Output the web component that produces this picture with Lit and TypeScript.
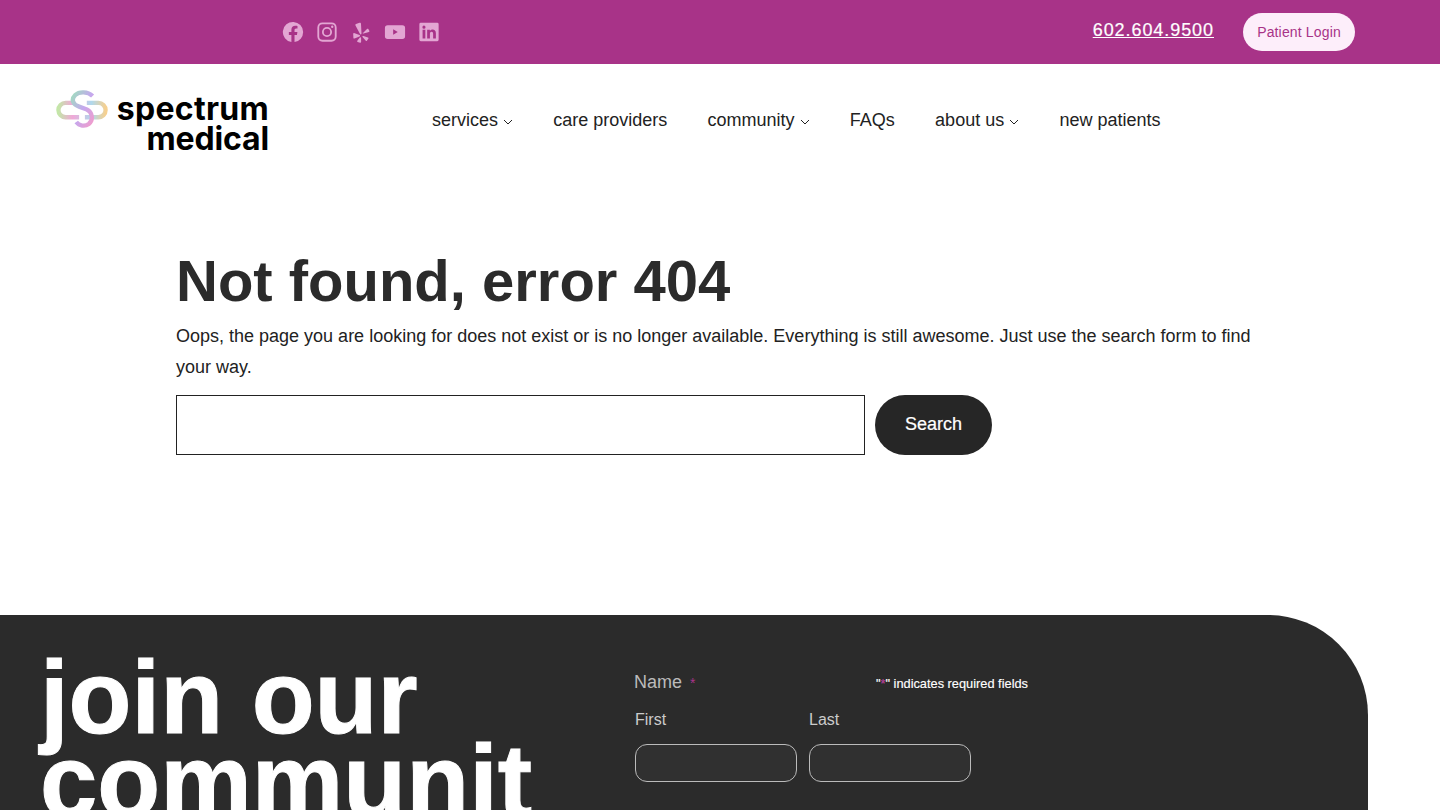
import { LitElement, html, css, svg } from "lit";
import { customElement } from "lit/decorators.js";

const chev = html`<svg class="chev" viewBox="0 0 10 6" width="10" height="6"><path d="M1 1l4 4 4-4" fill="none" stroke="#222" stroke-width="1"/></svg>`;

@customElement("app-root")
export class AppRoot extends LitElement {
  static styles = css`
    :host { display: block; height: 810px; overflow: hidden; font-family: "Liberation Sans", Arial, sans-serif; color: #222; background: #fff; }
    .top { height: 64px; background: #a83388; display: flex; align-items: center; padding: 0 85px 0 282px; }
    .social { display: flex; gap: 12px; align-items: center; }
    .social svg { width: 22px; height: 22px; display: block; fill: #e3a6d3; }
    .right { margin-left: auto; display: flex; align-items: center; gap: 29px; }
    .phone { color: #fff; font-size: 18px; letter-spacing: 0.93px; text-decoration: underline; margin-top: -3px; -webkit-text-stroke: 0.2px #fff; }
    .login { width: 112px; height: 38px; border-radius: 19px; background: #fdeefa; color: #a83388; font-size: 14px; letter-spacing: 0.15px; display: flex; align-items: center; justify-content: center; }
    .head { height: 112px; display: flex; align-items: flex-start; }
    .logo { width: 213px; padding: 26px 0 0 56px; display: flex; }
    .logo svg { width: 52px; height: 41px; flex: none; }
    .wordmark { font-family: "Inter", "Liberation Sans", sans-serif; font-weight: 700; font-size: 32px; line-height: 30px; color: #000; text-align: right; width: 154px; margin-left: 7px; letter-spacing: 0.3px; margin-top: 4px; }
    .wordmark span { letter-spacing: -0.15px; }
    nav { display: flex; align-items: flex-start; gap: 40.25px; margin-left: 163px; padding-top: 44px; font-size: 18px; line-height: 24px; color: #222; }
    nav a { display: flex; align-items: center; gap: 5px; white-space: nowrap; }
    .chev { margin-top: 3px; }
    main { height: 439px; padding: 72px 0 0 176px; box-sizing: border-box; }
    h1 { margin: 0; font-size: 58px; line-height: 66px; font-weight: 700; color: #2b2b2b; }
    p { margin: 7px 0 0; width: 1090px; font-size: 18px; line-height: 31px; color: #222; }
    .search { display: flex; gap: 10px; margin-top: 12px; }
    .field { width: 689px; height: 60px; border: 1px solid #222; box-sizing: border-box; background: #fff; }
    .btn { width: 117px; height: 60px; padding-bottom: 2px; box-sizing: border-box; border-radius: 30px; background: #262626; color: #fff; font-size: 18px; -webkit-text-stroke: 0.2px #fff; display: flex; align-items: center; justify-content: center; }
    footer { width: 1368px; height: 195px; background: #2b2b2b; border-top-right-radius: 100px; display: flex; overflow: hidden; }
    .join { width: 634px; flex: none; padding: 41px 74px 0 40px; box-sizing: border-box; font-size: 103px; line-height: 84px; font-weight: 700; color: #fff; -webkit-text-stroke: 1px #fff; overflow-wrap: anywhere; }
    .form { width: 394px; color: #ccc; }
    .namerow { display: flex; justify-content: space-between; align-items: flex-end; padding-top: 55px; line-height: 24px; }
    .name { font-size: 18px; color: #bbb; }
    .name b { color: #a83388; font-weight: 400; font-size: 14px; margin-left: 3px; }
    .req { font-size: 12.8px; color: #fff; line-height: 18px; position: relative; top: -2px; -webkit-text-stroke: 0.15px #fff; }
    .req b { color: #b8409a; font-weight: 400; -webkit-text-stroke: 0.15px #b8409a; }
    .cols { display: flex; gap: 12px; margin-top: 15px; padding-left: 1px; }
    .col { width: 162px; font-size: 16px; line-height: 20px; color: #ccc; }
    .in { margin-top: 14px; height: 38px; border: 1px solid #bbb; border-radius: 12px; box-sizing: border-box; background: #303030; }
  `;

  render() {
    return html`
      <div class="top">
        <div class="social">
          <svg viewBox="-1 -1 26 26"><path d="M24 12a12 12 0 1 0-13.900 11.900v-8.400H7.100V12h3V9.400c0-3 1.800-4.700 4.500-4.700 1.300 0 2.700.2 2.700.2v3h-1.500c-1.500 0-2 .9-2 1.900V12h3.400l-.5 3.500h-2.900v8.400A12 12 0 0 0 24 12z"/></svg>
          <svg viewBox="0 0 24 24"><path fill-rule="evenodd" d="M7 1.500h10A5.500 5.500 0 0 1 22.500 7v10a5.500 5.500 0 0 1-5.500 5.500H7A5.500 5.500 0 0 1 1.500 17V7A5.500 5.500 0 0 1 7 1.500zm0 2A3.500 3.500 0 0 0 3.500 7v10A3.500 3.500 0 0 0 7 20.500h10a3.500 3.500 0 0 0 3.500-3.500V7A3.500 3.500 0 0 0 17 3.500zM12 6.500a5.500 5.500 0 1 1 0 11 5.500 5.500 0 0 1 0-11zm0 2a3.500 3.500 0 1 0 0 7 3.500 3.500 0 0 0 0-7zM17.700 5a1.300 1.300 0 1 1 0 2.600 1.300 1.300 0 0 1 0-2.600z"/></svg>
          <svg viewBox="0 0 22 22"><path d="M6 3L9.500 1.800C10.500 1.600 11 2 11 3L11.500 12.500C11.500 13.500 10.500 13.800 10 13L5.500 4.500C5.200 3.800 5.500 3.300 6 3zM13 12L17 8c.5-.5 1-.4 1.300.1l1 1.700c.3.5.1 1-.4 1.200l-5.400 1.500c-.7.2-1-.5-.5-1zM4 12L9.500 14c.8.3.7 1.200 0 1.500L4.500 17.500c-.6.2-1 0-1.100-.6L3.200 13c0-.7.300-1.100.800-1zM9.800 16.500c.5-.6 1.300-.3 1.300.4v4c0 .6-.4.9-1 .8l-2.500-.8c-.5-.2-.6-.7-.3-1.100zM13.500 15l4.500 1.500c.5.2.7.7.4 1.100l-1.500 2.200c-.3.4-.8.4-1.100 0L12.500 16c-.4-.6.200-1.200 1-1z"/></svg>
          <svg viewBox="0 0 24 24"><path fill-rule="evenodd" d="M4 4.500h16a3 3 0 0 1 3 3v9a3 3 0 0 1-3 3H4a3 3 0 0 1-3-3v-9a3 3 0 0 1 3-3zM10 9v6l5-3z"/></svg>
          <svg viewBox="0 0 24 24"><path fill-rule="evenodd" d="M3 2h18a1.500 1.500 0 0 1 1.500 1.500v17A1.500 1.500 0 0 1 21 22H3a1.500 1.500 0 0 1-1.500-1.500v-17A1.500 1.500 0 0 1 3 2zm2 7.500v9.500h3V9.500zM6.500 5a1.700 1.700 0 1 0 0 3.400 1.700 1.700 0 0 0 0-3.400zM10 9.500V19h3v-5c0-1.500.7-2.300 1.800-2.300s1.700.8 1.700 2.300v5h3v-5.700c0-2.700-1.500-4-3.500-4-1.400 0-2.400.7-3 1.500V9.500z"/></svg>
        </div>
        <div class="right">
          <span class="phone">602.604.9500</span>
          <span class="login">Patient Login</span>
        </div>
      </div>
      <div class="head">
        <div class="logo">
          <svg viewBox="0 0 54 42" fill="none" stroke-width="4.500">
            <defs>
              <linearGradient id="a" x1="0" x2="1" y1="0" y2="1">
                <stop offset="0" stop-color="#a0dcc0"/><stop offset=".5" stop-color="#c4a8ee"/><stop offset="1" stop-color="#f39ccb"/>
              </linearGradient>
              <linearGradient id="b" x1="0" x2="1" y1="0" y2="0">
                <stop offset="0" stop-color="#c4e6a8"/><stop offset=".3" stop-color="#f0a8d8"/><stop offset=".7" stop-color="#b0d8ec"/><stop offset="1" stop-color="#f6d090"/>
              </linearGradient>
            </defs>
            ${svg`<path stroke="url(#b)" d="M20 13H10a7.500 7.500 0 0 0 0 15h14M32 13h12a7.500 7.500 0 0 1 0 15H30"/>
            <path stroke="url(#a)" d="M38 6C33 1 24 1 20 5C15 10 18 15 24 17L32 20C38 23 39 31 34 35C30 38 24 37 21 33"/>`}
          </svg>
          <div class="wordmark">spectrum <span>medical</span></div>
        </div>
        <nav>
          <a>services ${chev}</a>
          <a>care providers</a>
          <a>community ${chev}</a>
          <a>FAQs</a>
          <a>about us ${chev}</a>
          <a>new patients</a>
        </nav>
      </div>
      <main>
        <h1>Not found, error 404</h1>
        <p>Oops, the page you are looking for does not exist or is no longer available. Everything is still awesome. Just use the search form to find your way.</p>
        <div class="search"><div class="field"></div><div class="btn">Search</div></div>
      </main>
      <footer>
        <div class="join">join our community</div>
        <div class="form">
          <div class="namerow"><span class="name">Name <b>*</b></span><span class="req">"<b>*</b>" indicates required fields</span></div>
          <div class="cols">
            <div class="col">First<div class="in"></div></div>
            <div class="col">Last<div class="in"></div></div>
          </div>
        </div>
      </footer>
    `;
  }
}
